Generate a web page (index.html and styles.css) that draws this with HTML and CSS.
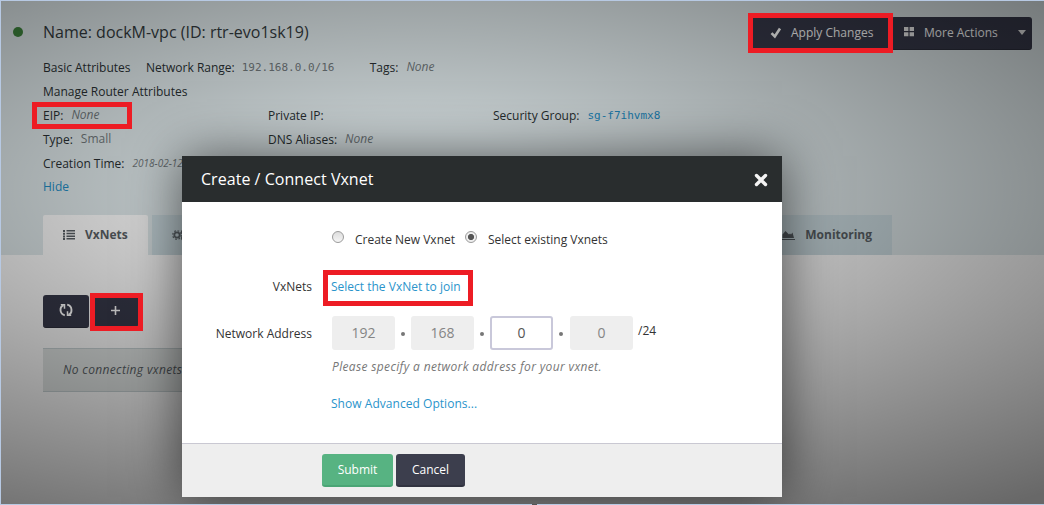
FILE: index.html
```html
<!DOCTYPE html>
<html lang="en">
<head>
<meta charset="utf-8">
<title>dockM-vpc</title>
<link rel="stylesheet" href="styles.css">
</head>
<body>
<div class="page">
  <header class="head">
    <div class="titlebar">
      <i class="status"></i>
      <h1 class="name">Name: dockM-vpc (ID: rtr-evo1sk19)</h1>
      <div class="actions">
        <button class="dark apply"><svg width="12" height="12" viewBox="0 0 12 12"><path d="M1.500 6.200 4.800 9.500 10 1.500" fill="none" stroke="#f5f5f5" stroke-width="2.600"/></svg><span>Apply Changes</span></button>
        <button class="dark more"><svg width="10" height="10" viewBox="0 0 10 10" fill="#e5e5e5"><path d="M0 0h4.400v4H0zM5.600 0H10v4H5.600zM0 5.200h4.400v4H0zM5.600 5.200H10v4H5.600z"/></svg><span>More Actions</span><i class="caret"></i></button>
      </div>
    </div>
    <div class="row row-basic"><span class="lab basic">Basic Attributes</span><span class="lab range">Network Range:</span><code class="val mono cidr">192.168.0.0/16</code><span class="lab">Tags:</span><em class="val">None</em></div>
    <div class="row"><span class="lab manage">Manage Router Attributes</span></div>
    <div class="row grid">
      <div class="cell"><span class="lab">EIP:</span><em class="val">None</em></div>
      <div class="cell"><span class="lab">Private IP:</span></div>
      <div class="cell"><span class="lab sg">Security Group:</span><code class="mono blue">sg-f7ihvmx8</code></div>
    </div>
    <div class="row grid">
      <div class="cell"><span class="lab">Type:</span><span class="val">Small</span></div>
      <div class="cell"><span class="lab dns">DNS Aliases:</span><em class="val">None</em></div>
    </div>
    <div class="row"><span class="lab time">Creation Time:</span><em class="val date">2018-02-12</em></div>
    <div class="row row-hide"><a class="blue">Hide</a></div>
    <nav class="tabs">
      <div class="tab active"><svg width="12" height="10" viewBox="0 0 12 10" fill="#555b60"><path d="M0 0h2v2H0zM3.500 0H12v1.600H3.500zM0 2.700h2v2H0zM3.500 2.700H12v1.600H3.500zM0 5.400h2v2H0zM3.500 5.400H12v1.600H3.500zM0 8h2v2H0zM3.500 8H12v1.600H3.500z"/></svg><span>VxNets</span></div>
      <div class="tab rest"><svg class="gears" width="16" height="12" viewBox="0 0 16 12" fill="none" stroke="#5d656a"><circle cx="5" cy="6" r="2.700" stroke-width="1.800"/><circle cx="5" cy="6" r="4.300" stroke-width="1.200" stroke-dasharray="1.700 1.680"/><circle cx="11.500" cy="3" r="1.800" stroke-width="1.500"/><circle cx="11.500" cy="9" r="1.800" stroke-width="1.500"/></svg>
        <div class="monitor"><svg width="14" height="10" viewBox="0 0 14 10" fill="#555b60"><path d="M1.500 8V4.500L4.500 1 8 4.500 9 3.500l1 1L11.500 2.500 13 8zM0 9h14v1H0z"/></svg><span>Monitoring</span></div></div>
    </nav>
  </header>
  <main class="content">
    <div class="toolbar">
      <button class="dark refresh"><svg width="14" height="14" viewBox="0 0 14 14" fill="none" stroke="#f8f8f8" stroke-width="1.900"><path d="M5.800 12.300C.3 11 .3 3.600 4.600 2.300M8.200 1.700C13.700 3 13.700 10.400 9.400 11.700"/><path d="M1.800 1.800h3.700v4M12.200 12.200H8.500v-4" stroke-width="1.500"/></svg></button>
      <button class="dark plus"><svg width="9" height="9" viewBox="0 0 9 9"><path d="M4.500 0v9M0 4.500h9" stroke="#f2f2f2" stroke-width="1.600"/></svg></button>
    </div>
    <div class="empty">No connecting vxnets</div>
  </main>
</div>
<div class="shade"></div>
<section class="dialog">
  <header class="dlg-head"><h2>Create / Connect Vxnet</h2><svg width="14" height="14" viewBox="0 0 14 14"><path d="M2.500 2.500l9 9M11.500 2.500l-9 9" stroke="#f4f4f4" stroke-width="3.400" stroke-linecap="round"/></svg></header>
  <div class="dlg-body">
    <div class="choices"><i class="radio"></i><span class="create">Create New Vxnet</span><i class="radio on"></i><span class="existing">Select existing Vxnets</span></div>
    <div class="field vx"><label>VxNets</label><a class="link join">Select the VxNet to join</a></div>
    <div class="field addr"><label class="na">Network Address</label><span class="octet">192</span><b></b><span class="octet">168</span><b></b><span class="octet edit">0</span><b class="last"></b><span class="octet">0</span><span class="mask">/24</span></div>
    <p class="hint">Please specify a network address for your vxnet.</p>
    <a class="link adv">Show Advanced Options...</a>
  </div>
  <footer class="dlg-foot"><button class="btn submit">Submit</button><button class="btn cancel">Cancel</button></footer>
</section>
<i class="mark m-apply"></i><i class="mark m-eip"></i><i class="mark m-plus"></i><i class="mark m-join"></i>
<i class="frame"></i><i class="nub"></i>
</body>
</html>
```
FILE: styles.css
```css
* { box-sizing: border-box; }
body { margin: 0; width: 1044px; height: 505px; overflow: hidden; position: relative; font: 12px/16px "Open Sans", sans-serif; color: #333; }
h1, h2, p { margin: 0; font-weight: 400; }
button { border: 0; padding: 0; font: inherit; }
svg { flex: none; }
span, em, a, code, h1, h2, p { white-space: nowrap; }
.page { height: 505px; background: #f0f0f0; }
.head { height: 255px; background: #d4dddf; padding: 16px 12px 0 43px; display: flex; flex-direction: column; }
.titlebar { height: 34px; display: flex; align-items: center; }
.status { width: 10px; height: 10px; border-radius: 50%; background: #3b7f3a; margin: -2px 20px 0 -30px; }
.name { font-size: 16px; line-height: 22px; margin-top: -2px; color: #30373a; }
.actions { margin-left: auto; display: flex; }
.dark { height: 33px; background: #343646; color: #f2f2f2; border-bottom: 1px solid #292b38; border-radius: 3px; display: flex; align-items: center; }
.apply { width: 141px; padding-left: 20px; gap: 9px; }
.more { width: 141px; padding: 0 6px 0 13px; gap: 10px; }
.more svg { margin-top: -2px; }
.caret { margin-left: auto; border: 4.500px solid transparent; border-top: 5px solid #ddd; border-bottom: 0; }
.row { height: 24px; display: flex; align-items: center; }
.row-basic { height: 25px; margin-top: 5px; }
.row-basic .basic { width: 103px; margin: 0; }
.cidr { width: 128px; }
.lab { color: #272d30; margin-right: 8px; }
.range { margin-right: 7px; }
.val { color: #6b7275; position: relative; top: -1px; }
.mono { font: 11px/16px "DejaVu Sans Mono", monospace; }
.row-basic .mono { top: 0; }
.blue { color: #2086bb; }
.grid { display: grid; grid-template-columns: 225px 225px 1fr; }
.cell { display: flex; }
.date { font-size: 10px; }
.row-hide { height: 22px; }
.tabs { display: flex; gap: 4px; margin-top: auto; height: 40px; font-weight: 700; color: #555b60; }
.tab { display: flex; align-items: center; }
.active { width: 105px; padding-left: 20px; gap: 10px; background: #f0f0f0; border-radius: 2px 2px 0 0; }
.rest { width: 740px; padding: 0 20px; justify-content: space-between; background: #c3d2d7; }
.monitor { display: flex; align-items: center; gap: 10px; }
.content { padding: 40px 43px; }
.toolbar { display: flex; gap: 3px; }
.refresh, .plus { width: 46px; justify-content: center; }
.refresh svg, .plus svg { margin-top: -2px; }
.empty { margin-top: 20px; width: 560px; height: 44px; padding: 13px 20px; border: solid #bdc7c9; border-width: 1px 0; background: #d6dad9; font-style: italic; letter-spacing: .35px; color: #555b60; }
.shade { position: absolute; inset: 0; background: radial-gradient(1000px 390px at 420px 190px, rgba(0,0,0,.03), rgba(0,0,0,.07) 15%, rgba(0,0,0,.24) 44%, rgba(0,0,0,.57)); }
.dialog { position: absolute; left: 182px; top: 156px; width: 600px; height: 341px; background: #fff; box-shadow: 0 0 50px rgba(0,0,0,.6); display: flex; flex-direction: column; }
.dlg-head { height: 46px; background: #292d2e; color: #fff; padding: 0 14px 0 19px; display: flex; align-items: center; justify-content: space-between; }
.dlg-head h2 { font-size: 16px; line-height: 22px; letter-spacing: .04px; }
.dlg-head svg { margin-top: 2px; }
.dlg-body { flex: 1; }
.choices { display: flex; align-items: center; padding: 28px 0 0 150px; height: 46px; }
.radio { width: 12px; height: 12px; margin-top: -4px; border: 1px solid #9b9b9b; border-radius: 50%; background: linear-gradient(#ddd, #f5f5f5); }
.on { background: radial-gradient(circle, #555 0 2.700px, #eee 3.500px); }
.create { margin: 2px 10px 0 11px; width: 100px; }
.existing { margin: 2px 0 0 11px; }
.field { display: flex; align-items: center; }
.field label { width: 130px; margin-right: 20px; text-align: right; }
.vx { margin-top: 31px; height: 16px; }
.vx .join { margin-left: -1px; }
.addr { margin-top: 21px; height: 34px; }
.field .na { margin-top: 2px; }
.octet { width: 63px; height: 34px; line-height: 33px; font-size: 14px; text-align: center; color: #858585; background: #eee; border-radius: 3px; }
.edit { background: #fff; border: 2px solid #c9c8da; color: #555; line-height: 30px; }
.addr b { width: 4px; height: 4px; margin: 1px 6px 0; border-radius: 50%; background: #777; }
.addr .last { margin-right: 7px; }
.mask { margin: -4px 0 0 5px; }
.link { color: #2a94cb; }
.hint { margin: 9px 0 0 150px; font-style: italic; letter-spacing: .35px; color: #777; }
.adv { display: block; margin: 21px 0 0 149px; letter-spacing: .04px; }
.dlg-foot { height: 54px; border-top: 1px solid #c9c8d2; background: #eee; display: flex; gap: 3px; padding: 10px 0 0 140px; }
.btn { height: 33px; color: #fff; border-radius: 3px; }
.submit { width: 71px; background: #57b382; border-bottom: 2px solid #4aa575; }
.cancel { width: 69px; background: #3c3e4d; border-bottom: 2px solid #313340; }
.mark { position: absolute; border: 5px solid #ed1c24; }
.m-apply { left: 748px; top: 13px; width: 145px; height: 40px; }
.m-eip { left: 32px; top: 102px; width: 100px; height: 27px; }
.m-plus { left: 90px; top: 293px; width: 53px; height: 38px; }
.m-join { left: 323px; top: 270px; width: 150px; height: 36px; }
.frame { position: absolute; inset: 0 -1px 0 0; border: 1px solid #b7c9e3; }
.nub { position: absolute; left: 532px; top: 504px; width: 5px; height: 1px; background: #555; }
```
